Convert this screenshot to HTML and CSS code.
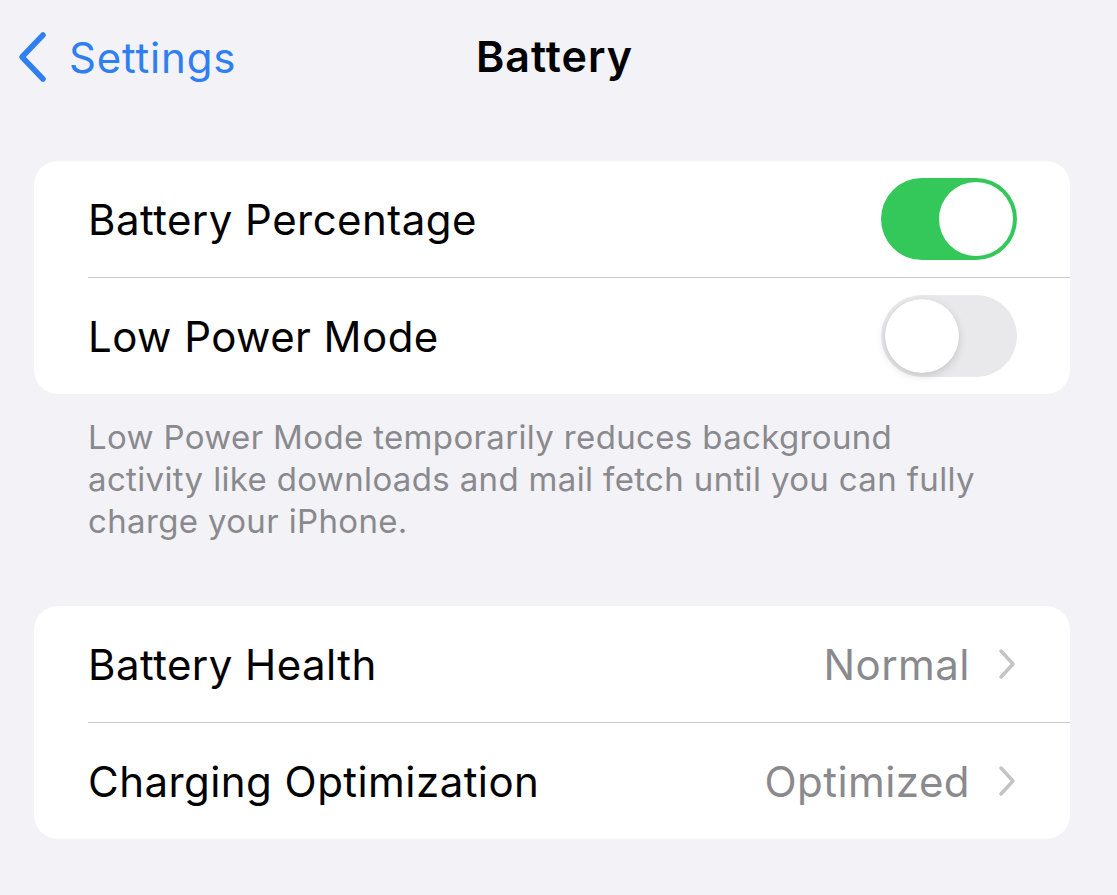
FILE: index.html
```html
<!DOCTYPE html>
<html>
  <head>
    <title>Battery</title>
    <link rel="stylesheet" href="styles.css">
  </head>

  <body>
    <div class="nav">
      <a class="back" href="#">
        <svg class="back-icon" width="32" height="52" viewBox="0 0 32 52">
          <path d="M27 4 L6 26 L27 48" fill="none" stroke="#2f7ff0" stroke-width="5.5" stroke-linecap="round" stroke-linejoin="round"/>
        </svg>
        <span>Settings</span>
      </a>
      <h1 class="title">Battery</h1>
    </div>

    <div class="group">
      <div class="row">
        <span class="label">Battery Percentage</span>
        <span class="switch on"><span class="knob"></span></span>
      </div>
      <div class="row">
        <span class="label">Low Power Mode</span>
        <span class="switch"><span class="knob"></span></span>
      </div>
    </div>
    <p class="footer">
      Low Power Mode temporarily reduces background activity like downloads and mail fetch until you can fully charge your iPhone.
    </p>

    <div class="group">
      <div class="row">
        <span class="label">Battery Health</span>
        <span class="detail">Normal
          <svg class="chevron" width="18" height="32" viewBox="0 0 18 32">
            <path d="M3 3 L15 16 L3 29" fill="none" stroke="#c4c4c7" stroke-width="3.5" stroke-linecap="round" stroke-linejoin="round"/>
          </svg>
        </span>
      </div>
      <div class="row">
        <span class="label">Charging Optimization</span>
        <span class="detail">Optimized
          <svg class="chevron" width="18" height="32" viewBox="0 0 18 32">
            <path d="M3 3 L15 16 L3 29" fill="none" stroke="#c4c4c7" stroke-width="3.5" stroke-linecap="round" stroke-linejoin="round"/>
          </svg>
        </span>
      </div>
    </div>
  </body>

</html>
```

FILE: styles.css
```css
body {
  margin: 0;
  padding: 0 47px 0 34px;
  font-family: Inter, "Noto Sans", sans-serif;
  background-color: #f2f2f7;
  color: #000;
}

.nav {
  position: relative;
  height: 114px;
  margin-left: -34px;
  margin-right: -47px;
}

.back {
  position: absolute;
  left: 16px;
  top: 31px;
  display: flex;
  align-items: center;
  gap: 21px;
  color: #2f7ff0;
  text-decoration: none;
  font-size: 42px;
  letter-spacing: 0.8px;
}

.title {
  margin: 0;
  padding-top: 30px;
  text-align: center;
  font-size: 43px;
  font-weight: 600;
  line-height: 52px;
  letter-spacing: 1px;
  padding-right: 8px;
}

.group {
  background: white;
  border-radius: 24px;
  margin: 47px 0 0;
  padding-left: 54px;
  overflow: hidden;
}

.row {
  display: flex;
  align-items: center;
  justify-content: space-between;
  height: 116px;
  padding-right: 53px;
  font-size: 42px;
  letter-spacing: 0.45px;
}

.row + .row {
  border-top: 1px solid #c8c8cc;
}

.switch {
  position: relative;
  width: 136px;
  height: 82px;
  border-radius: 41px;
  background: #e9e9eb;
}

.switch.on {
  background: #34c759;
}

.knob {
  position: absolute;
  top: 4px;
  left: 4px;
  width: 74px;
  height: 74px;
  border-radius: 50%;
  background: white;
  box-shadow: 0 3px 8px rgba(0, 0, 0, 0.15), 0 0 1px rgba(0, 0, 0, 0.1);
}

.switch.on .knob {
  left: 58px;
  box-shadow: none;
}

.footer {
  width: 915px;
  margin: 22px 0 0;
  padding-left: 54px;
  font-size: 33px;
  line-height: 42px;
  letter-spacing: 0.35px;
  color: #8a8a8e;
}

.group + .footer + .group {
  margin-top: 64px;
}

.detail {
  display: flex;
  align-items: center;
  gap: 28px;
  color: #8a8a8e;
  margin-right: 1px;
}
```
